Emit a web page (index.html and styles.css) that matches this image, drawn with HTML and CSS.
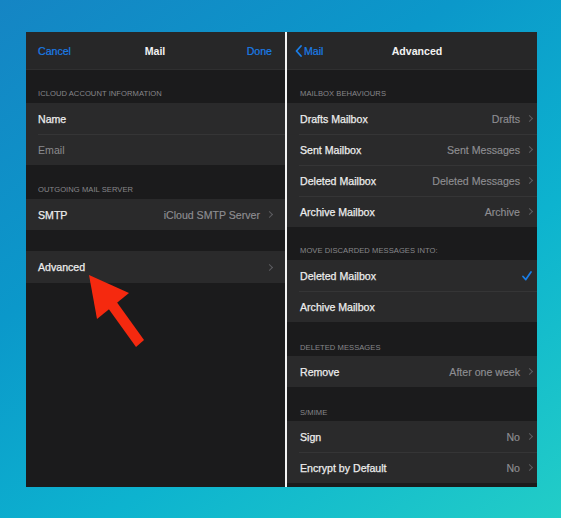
FILE: index.html
```html
<!DOCTYPE html>
<html>
<head>
<meta charset="utf-8">
<link rel="stylesheet" href="styles.css">
</head>
<body>
<div class="stage">
  <div class="phones">
    <section class="panel left">
      <header class="nav">
        <span class="link start">Cancel</span>
        <span class="title">Mail</span>
        <span class="link end">Done</span>
      </header>
      <div class="sec">iCloud Account Information</div>
      <div class="group">
        <div class="row"><span class="label">Name</span></div>
        <div class="row"><span class="label dim">Email</span></div>
      </div>
      <div class="sec">Outgoing Mail Server</div>
      <div class="group">
        <div class="row"><span class="label">SMTP</span><span class="val">iCloud SMTP Server</span><span class="chev"></span></div>
      </div>
      <div class="gap"></div>
      <div class="group">
        <div class="row tall"><span class="label">Advanced</span><span class="val"></span><span class="chev"></span></div>
      </div>
    </section>
    <div class="divider"></div>
    <section class="panel right">
      <header class="nav">
        <span class="link back start"><svg class="backchev" width="7" height="12" viewBox="0 0 7 12"><path d="M6 1 L1.5 6 L6 11" fill="none" stroke="#1a7ee8" stroke-width="1.8" stroke-linecap="round" stroke-linejoin="round"/></svg>Mail</span>
        <span class="title">Advanced</span>
        <span class="link end ghost">Done</span>
      </header>
      <div class="sec">Mailbox Behaviours</div>
      <div class="group">
        <div class="row"><span class="label">Drafts Mailbox</span><span class="val">Drafts</span><span class="chev"></span></div>
        <div class="row"><span class="label">Sent Mailbox</span><span class="val">Sent Messages</span><span class="chev"></span></div>
        <div class="row"><span class="label">Deleted Mailbox</span><span class="val">Deleted Messages</span><span class="chev"></span></div>
        <div class="row"><span class="label">Archive Mailbox</span><span class="val">Archive</span><span class="chev"></span></div>
      </div>
      <div class="sec">Move discarded messages into:</div>
      <div class="group">
        <div class="row"><span class="label">Deleted Mailbox</span><span class="val"></span><svg class="check" width="10" height="10" viewBox="0 0 10 10"><path d="M1 5.5 L3.8 8.6 L9 1" fill="none" stroke="#1a7ee8" stroke-width="1.7" stroke-linecap="round" stroke-linejoin="round"/></svg></div>
        <div class="row"><span class="label">Archive Mailbox</span></div>
      </div>
      <div class="sec s3">Deleted Messages</div>
      <div class="group">
        <div class="row"><span class="label">Remove</span><span class="val">After one week</span><span class="chev"></span></div>
      </div>
      <div class="sec s4">S/MIME</div>
      <div class="group">
        <div class="row"><span class="label">Sign</span><span class="val">No</span><span class="chev"></span></div>
        <div class="row"><span class="label">Encrypt by Default</span><span class="val">No</span><span class="chev"></span></div>
      </div>
    </section>
  </div>
  <svg class="arrow" width="561" height="518" viewBox="0 0 561 518">
    <polygon points="89,275 129,293 97,319" fill="#f5290f"/>
    <polygon points="116,301 108,308 136,347 144,340" fill="#f5290f"/>
  </svg>
</div>
</body>
</html>
```

FILE: styles.css
```css
html, body {
  margin: 0;
  padding: 0;
}
body {
  width: 561px;
  height: 518px;
  overflow: hidden;
  font-family: "Liberation Sans", Arial, sans-serif;
}
.stage {
  position: relative;
  width: 561px;
  height: 518px;
  box-sizing: border-box;
  padding: 32px 0 0 26px;
  background: linear-gradient(145deg, #1585c4 0%, #0b98ca 35%, #0db3cf 65%, #22cdc7 100%);
}
.phones {
  display: flex;
  height: 455px;
}
.panel {
  background: #1b1b1c;
  display: flex;
  flex-direction: column;
  overflow: hidden;
}
.left { width: 259px; }
.right { width: 250px; }
.divider {
  width: 2px;
  background: #f4f4f4;
}
.nav {
  height: 38px;
  flex: none;
  background: #272728;
  border-bottom: 1px solid #2f2f30;
  box-sizing: border-box;
  display: grid;
  grid-template-columns: 1fr auto 1fr;
  align-items: center;
  padding: 0 13px 0 12px;
  font-size: 10.6px;
}
.right .nav { padding-left: 8px; }
.start { justify-self: start; }
.end { justify-self: end; }
.link {
  color: #1a7ee8;
  -webkit-text-stroke: 0.2px #1a7ee8;
}
.ghost { visibility: hidden; }
.back {
  display: flex;
  align-items: center;
  gap: 1px;
}
.backchev { margin-right: 1px; }
.title {
  color: #f2f2f2;
  font-weight: bold;
}
.right .title { margin-left: 15px; }
.sec {
  height: 33px;
  flex: none;
  box-sizing: border-box;
  display: flex;
  align-items: flex-end;
  padding: 0 0 5px 12px;
  font-size: 7.6px;
  text-transform: uppercase;
  color: #87878b;
  letter-spacing: 0.05px;
}
.left .sec + .group + .sec { height: 34px; }
.right .sec { padding-left: 13px; }
.s3 { height: 34px !important; padding-bottom: 4px !important; }
.s4 { height: 34px !important; padding-bottom: 4px !important; }
.group {
  background: #2a2a2b;
  flex: none;
}
.row {
  height: 31px;
  display: flex;
  align-items: center;
  padding: 0 11px 0 12px;
  box-sizing: border-box;
  font-size: 10.6px;
  position: relative;
}
.right .row { padding-left: 13px; padding-right: 3px; }
.row + .row::before {
  content: "";
  position: absolute;
  left: 12px;
  right: 0;
  top: 0;
  height: 1px;
  background: #353536;
}
.row.tall { height: 32px; }
.label {
  color: #ededed;
  -webkit-text-stroke: 0.25px #ededed;
}
.label.dim {
  color: #8a8a8e;
  -webkit-text-stroke: 0;
}
.val {
  margin-left: auto;
  color: #8e8e92;
  -webkit-text-stroke: 0.15px #8e8e92;
}
.chev {
  width: 4px;
  height: 4px;
  border-top: 1.2px solid #5c5c60;
  border-right: 1.2px solid #5c5c60;
  transform: rotate(45deg);
  margin-left: 7px;
  margin-right: 2px;
}
.check {
  margin-right: 2px;
}
.gap {
  height: 21px;
  flex: none;
}
.arrow {
  position: absolute;
  left: 0;
  top: 0;
  pointer-events: none;
}
```
